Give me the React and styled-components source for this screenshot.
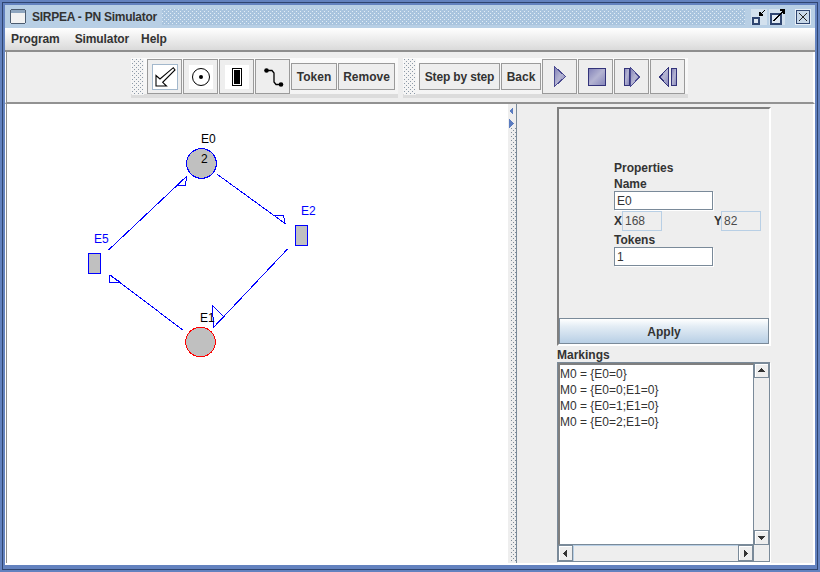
import React from 'react'
import styled, { createGlobalStyle } from 'styled-components'

const GlobalStyle = createGlobalStyle`
html, body {
  margin: 0;
  padding: 0;
  background: #6382bf;
}
* {
  box-sizing: border-box;
}
`

const Frame = styled.div`
width: 820px;
height: 572px;
padding: 5px 5px 7px 5px;
background: #6382bf;
box-shadow: inset 0 0 0 2px #6382bf, inset 0 0 0 3px #2f4570;
display: flex;
flex-direction: column;
font-family: "Liberation Sans", Arial, sans-serif;
color: #333;
overflow: hidden;
`

const TitleBar = styled.div`
height: 23px;
flex: none;
background: #b8cfe5;
display: flex;
align-items: center;
padding: 0 4px 0 5px;
`

const TitleText = styled.span`
font-size: 12px;
font-weight: 700;
letter-spacing: -0.25px;
color: #333;
margin: 0 5px 0 6px;
`

const TitleBumps = styled.div`
flex: 1;
height: 16px;
background-color: #a9c4de;
margin-right: 6px;
`

const TitleButton = styled.div`
width: 16px;
height: 16px;
flex: none;
margin-left: ${p => p.$gap}px;
`

const MenuBar = styled.div`
height: 24px;
flex: none;
display: flex;
align-items: center;
padding-left: 6px;
background: linear-gradient(#ffffff, #dadada);
border-bottom: 2px solid #8e8e8e;
`

const MenuItem = styled.span`
font-size: 12px;
font-weight: 700;
letter-spacing: -0.1px;
color: #333;
margin-right: ${p => p.$gap}px;
`

const ToolArea = styled.div`
height: 52px;
flex: none;
display: flex;
gap: 5px;
padding: 6px 0 0 125px;
background: #eeeeee;
border-left: 1px solid #fff;
border-right: 2px solid #fff;
border-bottom: 2px solid #929292;
box-shadow: inset 1px 0 0 #8e8e8e;
`

const ToolGroup = styled.div`
height: 40px;
display: flex;
align-items: center;
gap: 1px;
padding: 0 3px 3px 1px;
background: linear-gradient(#fbfbfb 0, #f4f4f4 90%, #dcdcdc 90%, #dcdcdc 100%);
`

const Grip = styled.div`
width: 12px;
height: 36px;
margin-right: ${p => p.$gap}px;
background-color: #f4f4f4;
`

const IconButton = styled.div`
width: 35px;
height: 35px;
flex: none;
display: flex;
align-items: center;
justify-content: center;
background: #eeeeee;
border: 1px solid #9a9a9a;
`

const IconFace = styled.div`
width: ${p => (p.$selected || p.$plain ? 26 : 24)}px;
height: ${p => (p.$selected || p.$plain ? 26 : 24)}px;
display: flex;
align-items: center;
justify-content: center;
background: ${p => (p.$plain ? 'transparent' : '#fff')};
border: ${p => (p.$selected ? '1px solid #a3b8cc' : 'none')};
`

const TextButton = styled.div`
height: 27px;
width: ${p => p.$w}px;
flex: none;
display: flex;
align-items: center;
justify-content: center;
padding-top: 1px;
font-size: 12px;
font-weight: 700;
letter-spacing: ${p => (p.$tight ? '-0.15px' : '0')};
color: #333;
background: #eeeeee;
border: 1px solid #9a9a9a;
`

const Content = styled.div`
flex: 1;
min-height: 0;
display: flex;
padding-left: 1px;
background: #eeeeee;
border-left: 1px solid #fff;
border-right: 2px solid #fff;
border-bottom: 2px solid #fff;
box-shadow: inset 1px 0 0 #8e8e8e;
`

const Canvas = styled.div`
width: 501px;
flex: none;
background: #fff;
`

const Divider = styled.div`
width: 8px;
flex: none;
display: flex;
flex-direction: column;
padding: 1px 0 1px 0;
background-color: #eeeeee;
`

const DividerDots = styled.div`
flex: 1;
min-height: 0;
margin-left: 3px;
width: 5px;
`

const SidePanel = styled.div`
flex: 1;
display: flex;
flex-direction: column;
padding: 3px 0 0 40px;
border-left: 1px solid #7a8a99;
`

const PropsBox = styled.div`
width: 214px;
height: 239px;
flex: none;
display: flex;
flex-direction: column;
background: #eeeeee;
border-top: 2px solid #7f7f7f;
border-left: 2px solid #7f7f7f;
border-right: 2px solid #fff;
border-bottom: 2px solid #fff;
`

const PropsForm = styled.div`
flex: 1;
width: 100px;
margin-left: 55px;
padding-top: 50px;
display: flex;
flex-direction: column;
`

const FieldLabel = styled.div`
font-size: 12px;
font-weight: 700;
color: #333;
line-height: 14px;
margin-top: 2px;
`

const Input = styled.div`
width: 99px;
height: 19px;
flex: none;
padding-left: 2px;
font-size: 12px;
line-height: 19px;
color: #333;
background: #fff;
border: 1px solid #7a8a99;
box-shadow: 1px 1px 0 #fff;
`

const CoordRow = styled.div`
height: 20px;
margin: 1px 0 0;
width: 148px;
flex: none;
display: flex;
align-items: center;
`

const CoordLabel = styled.span`
width: ${p => p.$w}px;
flex: none;
font-size: 12px;
font-weight: 700;
color: #333;
`

const CoordValue = styled.div`
width: 40px;
height: 20px;
flex: none;
padding-left: 2px;
font-size: 12px;
line-height: 18px;
color: #4a4a4a;
border: 1px solid #b8cfe5;
margin-right: ${p => p.$gap}px;
`

const ApplyButton = styled.div`
width: 210px;
height: 26px;
flex: none;
display: flex;
align-items: center;
justify-content: center;
padding-top: 2px;
font-size: 12px;
font-weight: 700;
color: #333;
background: linear-gradient(#ffffff, #e4edf5 30%, #b8cfe5);
border: 1px solid #7a8a99;
`

const MarkingsLabel = styled.div`
font-size: 12px;
font-weight: 700;
color: #333;
line-height: 14px;
margin-top: 2px;
`

const ListFrame = styled.div`
width: 213px;
height: 200px;
flex: none;
display: grid;
grid-template-columns: 1fr 15px;
grid-template-rows: 1fr 16px;
background: #eeeeee;
border: 1px solid #7a8a99;
box-shadow: 1px 1px 0 #fff;
`

const ListBody = styled.div`
background: #fff;
padding-top: 1px;
border-top: 2px solid #7f7f7f;
border-left: 2px solid #7f7f7f;
border-bottom: 1px solid #7a8a99;
border-right: 1px solid #7a8a99;
font-size: 12px;
line-height: 16px;
color: #333;
`

const VerticalBar = styled.div`
display: flex;
flex-direction: column;
justify-content: space-between;
`

const HorizontalBar = styled.div`
display: flex;
justify-content: space-between;
border-right: 1px solid #7a8a99;
`

const Track = styled.div`
flex: 1;
border-left: 1px solid #b8cfe5;
border-top: 1px solid #b8cfe5;
`

const ScrollButton = styled.div`
width: ${p => p.$w}px;
height: ${p => p.$h}px;
flex: none;
display: flex;
align-items: center;
justify-content: center;
background: #eeeeee;
border: 1px solid #7a8a99;
box-shadow: inset 1px 1px 0 #fff;
`

const Corner = styled.div`
background: #eeeeee;
`

// the metal look dotted texture
const Bumps = ({ id, color }) => (
  <svg width="100%" height="100%" style={{ display: 'block' }} shapeRendering="crispEdges">
    <defs>
      <pattern id={id} width="4" height="4" patternUnits="userSpaceOnUse">
        <rect x="0" y="0" width="1" height="1" fill={color} />
        <rect x="2" y="2" width="1" height="1" fill={color} />
      </pattern>
    </defs>
    <rect width="100%" height="100%" fill={`url(#${id})`} />
  </svg>
)

const Icon = ({ size = 24, children }) => (
  <svg width={size} height={size} viewBox={`0 0 ${size} ${size}`} shapeRendering="crispEdges">
    {children}
  </svg>
)

const Triangle = ({ d }) => (
  <svg width="9" height="9" viewBox="0 0 9 9" shapeRendering="crispEdges">
    <path d={d} fill="#333" />
  </svg>
)

const WindowIcon = () => (
  <svg width="16" height="16" viewBox="0 0 16 16" shapeRendering="crispEdges">
    <rect x="0.5" y="0.5" width="15" height="14" rx="2" fill="#f2f2f2" stroke="#4c5c70" />
    <rect x="1" y="1" width="14" height="3" fill="#8fa6bf" />
  </svg>
)

const MinimizeIcon = () => (
  <svg width="16" height="16" viewBox="0 0 16 16" shapeRendering="crispEdges">
    <rect x="0" y="0" width="16" height="16" fill="#d3e1ee" />
    <rect x="2" y="9" width="6" height="6" fill="#dfe8f2" stroke="#2f4570" strokeWidth="1.6" />
    <path d="M14 1 L9 6 M9 3 V6 H12" stroke="#000" strokeWidth="1.2" fill="none" />
  </svg>
)

const MaximizeIcon = () => (
  <svg width="16" height="16" viewBox="0 0 16 16" shapeRendering="crispEdges">
    <rect x="0" y="0" width="16" height="16" fill="#d3e1ee" />
    <rect x="2" y="5" width="10" height="10" fill="#dfe8f2" stroke="#2f4570" strokeWidth="1.6" />
    <path d="M4.5 12 L15 1.5 M11 1 H15 V5" stroke="#000" strokeWidth="1.1" fill="none" />
  </svg>
)

const CloseIcon = () => (
  <svg width="16" height="16" viewBox="0 0 16 16" shapeRendering="crispEdges">
    <rect x="0" y="0" width="16" height="16" fill="#e8eff6" />
    <rect x="1.5" y="1.5" width="13" height="13" fill="#c8d8e8" stroke="#2f4570" strokeWidth="1.5" />
    <path d="M4 4 L12 12 M12 4 L4 12" stroke="#222" strokeWidth="1.3" fill="none" />
  </svg>
)

const ArrowToolIcon = () => (
  <svg width="24" height="24" viewBox="0 0 24 24">
    <path d="M3 21 L3 10.5 L7 14 L20.3 2.7 L22 5 L9.7 17.3 L13.5 21 Z" fill="#fff" stroke="#000" strokeWidth="1.1" />
  </svg>
)

const PlaceIcon = () => (
  <Icon>
    <circle cx="12" cy="12" r="8.5" fill="#fff" stroke="#000" strokeWidth="1" shapeRendering="auto" />
    <circle cx="12" cy="12" r="2" fill="#000" shapeRendering="auto" />
  </Icon>
)

const TransitionIcon = () => (
  <Icon>
    <rect x="7.5" y="3.5" width="9" height="17" fill="#fff" stroke="#000" />
    <rect x="9" y="5" width="6" height="14" fill="#000" />
  </Icon>
)

const LinkIcon = () => (
  <svg width="26" height="26" viewBox="0 0 26 26">
    <path d="M6.5 6.5 H12 L14 9 V18 L16 20.5 H21" fill="none" stroke="#000" strokeWidth="1.3" />
    <circle cx="6.5" cy="6.5" r="2.3" fill="#000" />
    <circle cx="21" cy="20.5" r="2.3" fill="#000" />
  </svg>
)

const shade = 'url(#mediaShade)'

const MediaIcon = ({ children }) => (
  <svg width="26" height="26" viewBox="0 0 26 26" shapeRendering="crispEdges">
    <defs>
      <linearGradient id="mediaShade" x1="0" y1="0" x2="1" y2="1">
        <stop offset="0" stopColor="#7f7fb6" />
        <stop offset="0.5" stopColor="#b4b4d2" />
        <stop offset="1" stopColor="#8585ba" />
      </linearGradient>
    </defs>
    {children}
  </svg>
)

const PlayIcon = () => (
  <MediaIcon>
    <path d="M7.5 2.5 L7.5 22.5 L18.5 12.5 Z" fill={shade} stroke="#4a4a90" />
  </MediaIcon>
)

const StopIcon = () => (
  <MediaIcon>
    <rect x="5" y="4.5" width="17" height="17" fill={shade} stroke="#33337a" strokeWidth="1" />
  </MediaIcon>
)

const StepForwardIcon = () => (
  <MediaIcon>
    <rect x="5" y="4.5" width="5" height="17" fill={shade} stroke="#33337a" />
    <path d="M11.5 3.5 L11.5 22.5 L20.5 13 Z" fill={shade} stroke="#4a4a90" />
  </MediaIcon>
)

const StepBackIcon = () => (
  <MediaIcon>
    <rect x="16.5" y="4.5" width="5" height="17" fill={shade} stroke="#33337a" />
    <path d="M13.5 3.5 L13.5 22.5 L4.5 13 Z" fill={shade} stroke="#33337a" />
  </MediaIcon>
)

const links = [
  { line: [108.5, 250, 186.5, 176.5], head: '186.5,176.5 176.5,185.5 185.5,185.5' },
  { line: [217.5, 174.5, 285, 223.5], head: '285,223.5 274,215.5 283.5,215.5' },
  { line: [287.5, 249, 213.5, 327.5], head: '213.5,327.5 212.5,305.5 223.5,316.5' },
  { line: [183.5, 330.5, 110, 275], head: '110,275 109.5,282.5 120.5,282.5' },
]

const Diagram = () => (
  <svg width="501" height="459" viewBox="7 104 501 459" style={{ display: 'block' }}>
    <g shapeRendering="crispEdges" stroke="#0000ff" strokeWidth="1" fill="none">
      {links.map(l => (
        <g key={l.head}>
          <line x1={l.line[0]} y1={l.line[1]} x2={l.line[2]} y2={l.line[3]} />
          <polygon points={l.head} />
        </g>
      ))}
    </g>
    <g shapeRendering="crispEdges" fill="#c0c0c0" stroke="#0000ff">
      <circle cx="201.5" cy="163.5" r="14.8" />
      <circle cx="200.5" cy="342" r="14.8" stroke="#ff0000" />
      <rect x="295.5" y="225.5" width="12" height="20" />
      <rect x="88.5" y="253.5" width="12" height="20" />
    </g>
    <g fontFamily="Liberation Sans, Arial, sans-serif" fontSize="12">
      <text x="201" y="143" fill="#000">E0</text>
      <text x="200" y="322" fill="#000">E1</text>
      <text x="301" y="215" fill="#0000ff">E2</text>
      <text x="94" y="243" fill="#0000ff">E5</text>
      <text x="201" y="163" fill="#000">2</text>
    </g>
  </svg>
)

const markings = ['M0 = {E0=0}', 'M0 = {E0=0;E1=0}', 'M0 = {E0=1;E1=0}', 'M0 = {E0=2;E1=0}']

const App = () => (
  <Frame>
    <GlobalStyle />
    <TitleBar>
      <WindowIcon />
      <TitleText>SIRPEA - PN Simulator</TitleText>
      <TitleBumps><Bumps id="titleBumps" color="#e2edf6" /></TitleBumps>
      <TitleButton $gap={0}><MinimizeIcon /></TitleButton>
      <TitleButton $gap={2}><MaximizeIcon /></TitleButton>
      <TitleButton $gap={10}><CloseIcon /></TitleButton>
    </TitleBar>
    <MenuBar>
      <MenuItem $gap={15}>Program</MenuItem>
      <MenuItem $gap={12}>Simulator</MenuItem>
      <MenuItem $gap={0}>Help</MenuItem>
    </MenuBar>
    <ToolArea>
      <ToolGroup>
        <Grip $gap={2}><Bumps id="gripBumpsA" color="#8d9aa8" /></Grip>
        <IconButton><IconFace $selected><ArrowToolIcon /></IconFace></IconButton>
        <IconButton><IconFace><PlaceIcon /></IconFace></IconButton>
        <IconButton><IconFace><TransitionIcon /></IconFace></IconButton>
        <IconButton><IconFace $plain><LinkIcon /></IconFace></IconButton>
        <TextButton $w={46}>Token</TextButton>
        <TextButton $w={57}>Remove</TextButton>
      </ToolGroup>
      <ToolGroup>
        <Grip $gap={2}><Bumps id="gripBumpsB" color="#8d9aa8" /></Grip>
        <TextButton $w={81} $tight>Step by step</TextButton>
        <TextButton $w={40}>Back</TextButton>
        <IconButton><IconFace $plain><PlayIcon /></IconFace></IconButton>
        <IconButton><IconFace $plain><StopIcon /></IconFace></IconButton>
        <IconButton><IconFace $plain><StepForwardIcon /></IconFace></IconButton>
        <IconButton><IconFace $plain><StepBackIcon /></IconFace></IconButton>
      </ToolGroup>
    </ToolArea>
    <Content>
      <Canvas><Diagram /></Canvas>
      <Divider>
        <svg width="7" height="23" viewBox="0 0 7 23" shapeRendering="crispEdges" style={{ flex: 'none' }}>
          <path d="M5 2 V10 L1 6 Z" fill="#5b7cc0" />
          <path d="M1 14 V23 L6 18.5 Z" fill="#5b7cc0" />
        </svg>
        <DividerDots><Bumps id="dividerBumps" color="#7f8c99" /></DividerDots>
      </Divider>
      <SidePanel>
        <PropsBox>
          <PropsForm>
            <FieldLabel>Properties</FieldLabel>
            <FieldLabel>Name</FieldLabel>
            <Input>E0</Input>
            <CoordRow>
              <CoordLabel $w={8}>X</CoordLabel>
              <CoordValue $gap={52}>168</CoordValue>
              <CoordLabel $w={7}>Y</CoordLabel>
              <CoordValue $gap={0}>82</CoordValue>
            </CoordRow>
            <FieldLabel>Tokens</FieldLabel>
            <Input>1</Input>
          </PropsForm>
          <ApplyButton>Apply</ApplyButton>
        </PropsBox>
        <MarkingsLabel>Markings</MarkingsLabel>
        <ListFrame>
          <ListBody>
            {markings.map(m => (
              <div key={m}>{m}</div>
            ))}
          </ListBody>
          <VerticalBar>
            <ScrollButton $w={15} $h={15}><Triangle d="M1 6 H8 L4.5 2 Z" /></ScrollButton>
            <ScrollButton $w={15} $h={15}><Triangle d="M1 3 H8 L4.5 7 Z" /></ScrollButton>
          </VerticalBar>
          <HorizontalBar>
            <ScrollButton $w={15} $h={16}><Triangle d="M6 1 V8 L2 4.5 Z" /></ScrollButton>
            <Track />
            <ScrollButton $w={15} $h={16}><Triangle d="M3 1 V8 L7 4.5 Z" /></ScrollButton>
          </HorizontalBar>
          <Corner />
        </ListFrame>
      </SidePanel>
    </Content>
  </Frame>
)

export default App
